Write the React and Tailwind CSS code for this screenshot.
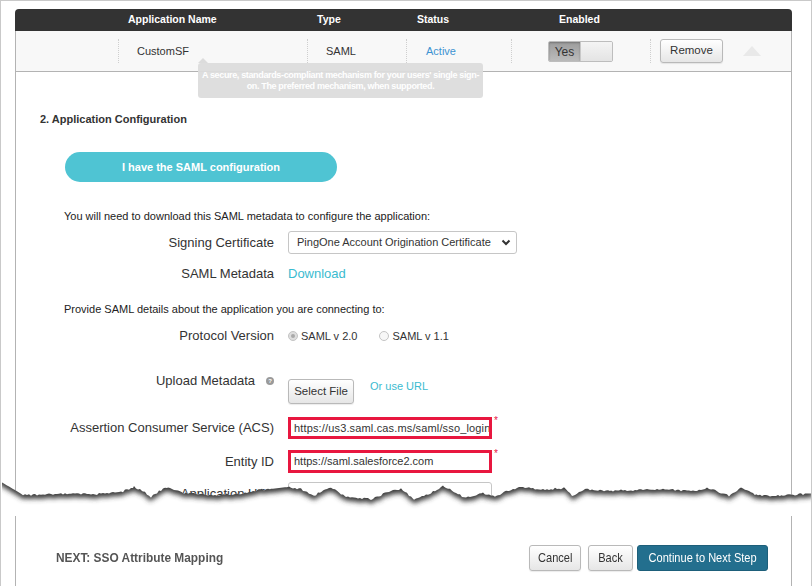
import React from "react";

const EDGE = [
  [0, 481], [14, 489], [22, 494], [60, 493], [100, 493], [120, 491], [133, 486], [142, 490],
  [150, 496], [158, 490], [167, 486], [175, 489], [183, 492], [210, 494], [240, 493],
  [255, 489], [270, 488], [288, 486], [300, 488], [313, 495], [322, 489], [330, 486],
  [345, 496], [370, 498], [390, 490], [400, 488], [413, 498], [430, 492], [443, 485],
  [455, 492], [465, 497], [480, 492], [495, 495], [508, 489], [520, 486], [540, 489],
  [563, 487], [572, 495], [585, 488], [610, 490], [630, 489], [660, 488], [690, 490],
  [708, 487], [728, 495], [740, 486], [755, 494], [780, 495], [812, 492],
];

// densify the tear line with a little deterministic noise
function tearPoints() {
  const pts = [];
  for (let i = 0; i < EDGE.length - 1; i++) {
    const [x0, y0] = EDGE[i];
    const [x1, y1] = EDGE[i + 1];
    for (let x = x0; x < x1; x += 2) {
      const t = (x - x0) / (x1 - x0);
      const n = Math.sin(x * 12.9898) * 43758.5453;
      const noise = (n - Math.floor(n) - 0.5) * 2;
      pts.push([x - 1, y0 + (y1 - y0) * t - 478 + (x > 20 ? noise : 0)]);
    }
  }
  pts.push([811, EDGE[EDGE.length - 1][1] - 478]);
  return pts;
}

function TornEdge() {
  const pts = tearPoints();
  const line = pts.map(([x, y], i) => `${i ? "L" : "M"}${x.toFixed(1)},${y.toFixed(1)}`).join(" ");
  const below = `${line} L811,40 L0,40 Z`;
  const above = `${line} L811,-20 L-20,-20 Z`;
  return (
    <svg className="absolute top-[478px] left-[1px]" width="810" height="37" viewBox="0 0 810 37">
      <defs>
        <clipPath id="tear-below">
          <path d={below} />
        </clipPath>
        <filter id="tear-blur" x="-5%" y="-100%" width="110%" height="300%">
          <feGaussianBlur stdDeviation="2.8" />
        </filter>
      </defs>
      <path d={below} fill="#ffffff" />
      <g clipPath="url(#tear-below)">
        <path d={above} fill="#3a3a3a" transform="translate(0,4)" filter="url(#tear-blur)" />
      </g>
    </svg>
  );
}

function Sep() {
  return <div className="h-[24px] border-l border-dotted border-[#cfcfcf]" />;
}

function Label({ children }) {
  return (
    <div className="w-[234px] flex items-center justify-end text-[13px] text-[#333] leading-[18px]">
      {children}
    </div>
  );
}

function GrayButton({ children, className = "" }) {
  return (
    <button
      className={`rounded-[3px] border border-[#b9b9b9] bg-gradient-to-b from-white to-[#e6e6e6] text-[#333] shadow-[0_1px_1px_rgba(0,0,0,0.08)] ${className}`}
    >
      {children}
    </button>
  );
}

export default function App() {
  return (
    <div className="relative w-[812px] h-[586px] overflow-hidden bg-white border-t border-x border-[#c9c9c9] font-['Liberation_Sans',Arial,sans-serif]">
      {/* upper piece */}
      <div className="ml-[14px] mt-[8px] w-[777px] h-[500px] overflow-hidden flex flex-col">
        <div className="h-[22px] bg-[#333333] rounded-t-[4px] grid grid-cols-[103px_189px_99px_105px_139px_1fr] items-center text-white text-[10.5px] font-bold">
          <div />
          <div className="pl-[10px]">Application Name</div>
          <div className="pl-[10px]">Type</div>
          <div className="pl-[11px]">Status</div>
          <div className="pl-[48px]">Enabled</div>
          <div />
        </div>

        <div className="flex-1 border-x border-[#b3b3b3] relative">
          <div className="h-[41px] bg-[#f8f8f8] border-b border-[#b3b3b3] grid grid-cols-[102px_189px_99px_105px_139px_1fr] items-center text-[11px] text-[#333]">
            <div />
            <div className="flex items-center">
              <Sep />
              <span className="pl-[18px]">CustomSF</span>
            </div>
            <div className="flex items-center">
              <Sep />
              <span className="pl-[18px]">SAML</span>
            </div>
            <div className="flex items-center">
              <Sep />
              <span className="pl-[19px] text-[#3d93d2]">Active</span>
            </div>
            <div className="flex items-center">
              <Sep />
              <div className="ml-[36px] flex h-[21px] rounded-[2px] border border-[#bdbdbd] overflow-hidden">
                <div className="w-[31px] bg-gradient-to-b from-[#9c9c9c] to-[#bcbcbc] shadow-[inset_0_1px_2px_rgba(0,0,0,0.25)] flex items-start justify-center pt-[1px] text-[12px] text-[#333]">
                  Yes
                </div>
                <div className="w-[32px] bg-gradient-to-b from-[#f4f4f4] to-[#e4e4e4] border-l border-[#c8c8c8]" />
              </div>
            </div>
            <div className="flex items-center">
              <Sep />
              <GrayButton className="ml-[9px] w-[63px] h-[24px] text-[11.5px]">Remove</GrayButton>
              <div className="ml-[20px] w-0 h-0 border-x-[9px] border-x-transparent border-b-[10px] border-b-[#e9e9e9]" />
            </div>
          </div>

          {/* tooltip over the row */}
          <div className="absolute left-[182px] top-[27px] w-0 h-0 border-x-[5px] border-x-transparent border-b-[5px] border-b-[#dcdcdc]" />
          <div className="absolute left-[182px] top-[32px] w-[285px] h-[35px] rounded-[3px] bg-[#dcdcdc]/95 text-white text-[9px] font-bold leading-[11px] text-center pt-[7px] tracking-[-0.35px] whitespace-nowrap">
            A secure, standards-compliant mechanism for your users' single sign-
            <br />
            on. The preferred mechanism, when supported.
          </div>

          <div className="pl-[24px] flex flex-col text-[#333]">
            <div className="mt-[40px] h-[14px] leading-[14px] text-[11px] font-bold">2. Application Configuration</div>

            <button className="mt-[26px] ml-[25px] w-[272px] h-[30px] rounded-full bg-[#4fc4d3] text-white text-[11px] font-bold">
              I have the SAML configuration
            </button>

            <div className="mt-[27px] ml-[24px] h-[14px] leading-[14px] text-[11px] text-[#222]">
              You will need to download this SAML metadata to configure the application:
            </div>

            <div className="mt-[8px] flex items-center">
              <Label>Signing Certificate</Label>
              <div className="ml-[14px] w-[229px] h-[23px] rounded-[3px] border border-[#c6c6c6] bg-white flex items-center justify-between pl-[8px] pr-[5px] text-[11px] text-[#333]">
                <span>PingOne Account Origination Certificate</span>
                <svg width="10" height="7" viewBox="0 0 10 7">
                  <path d="M1.5 1.5 L5 5 L8.5 1.5" fill="none" stroke="#333" strokeWidth="2" />
                </svg>
              </div>
            </div>

            <div className="mt-[10px] h-[20px] flex items-center">
              <Label>SAML Metadata</Label>
              <span className="ml-[14px] text-[13px] text-[#3bbbd0]">Download</span>
            </div>

            <div className="mt-[18px] ml-[24px] h-[14px] leading-[14px] text-[11px] text-[#222]">
              Provide SAML details about the application you are connecting to:
            </div>

            <div className="mt-[10px] h-[20px] flex items-center">
              <Label>Protocol Version</Label>
              <div className="ml-[14px] flex items-center text-[11px] text-[#333]">
                <span className="w-[10px] h-[10px] rounded-full border border-[#c4c4c4] bg-[#dedede] flex items-center justify-center">
                  <span className="w-[4px] h-[4px] rounded-full bg-[#a9a9a9]" />
                </span>
                <span className="ml-[3px]">SAML v 2.0</span>
                <span className="ml-[22px] w-[10px] h-[10px] rounded-full border border-[#c4c4c4] bg-[#f7f7f7]" />
                <span className="ml-[3px]">SAML v 1.1</span>
              </div>
            </div>

            <div className="mt-[26px] flex items-start">
              <Label>
                <span>Upload Metadata</span>
                <span className="ml-[11px] w-[8px] h-[8px] rounded-full bg-[#9a9a9a] text-white text-[6px] leading-[8px] font-bold flex items-center justify-center">
                  ?
                </span>
              </Label>
              <GrayButton className="ml-[14px] mt-[7px] w-[66px] h-[25px] text-[11.5px]">Select File</GrayButton>
              <span className="ml-[16px] mt-[7px] leading-[14px] text-[11px] text-[#3bbbd0]">Or use URL</span>
            </div>

            <div className="mt-[13px] h-[22px] flex items-center">
              <Label>Assertion Consumer Service (ACS)</Label>
              <div className="ml-[14px] w-[204px] h-[22px] border-[3px] border-[#e8173f] bg-white flex items-center pl-[3px] text-[11px] text-[#333] overflow-hidden whitespace-nowrap tracking-[0.15px]">
                https://us3.saml.cas.ms/saml/sso_login
              </div>
              <span className="self-start ml-[2px] -mt-[1px] text-[10px] leading-[10px] text-[#e8173f]">*</span>
            </div>

            <div className="mt-[11px] h-[23px] flex items-center">
              <Label>Entity ID</Label>
              <div className="ml-[14px] w-[204px] h-[23px] border-[3px] border-[#e8173f] bg-white flex items-center pl-[3px] text-[11px] text-[#333] whitespace-nowrap">
                https://saml.salesforce2.com
              </div>
              <span className="self-start ml-[2px] -mt-[1px] text-[10px] leading-[10px] text-[#e8173f]">*</span>
            </div>

            <div className="mt-[9px] h-[23px] flex items-center">
              <Label>Application URL</Label>
              <div className="ml-[14px] w-[204px] h-[23px] rounded-[3px] border border-[#c6c6c6] bg-white" />
            </div>
          </div>
        </div>
      </div>

      {/* lower piece */}
      <div className="ml-[14px] mt-[6px] w-[777px] h-[71px] border-x border-[#b3b3b3] pt-[15px] pl-[40px] pr-[23px] flex items-center justify-between">
        <span className="text-[13.5px] font-bold text-[#555] scale-x-[0.88] origin-left whitespace-nowrap">
          NEXT: SSO Attribute Mapping
        </span>
        <div className="flex items-center gap-[7px]">
          <GrayButton className="w-[52px] h-[26px] text-[13px]">
            <span className="inline-block scale-x-[0.85]">Cancel</span>
          </GrayButton>
          <GrayButton className="w-[45px] h-[26px] text-[13px]">
            <span className="inline-block scale-x-[0.85]">Back</span>
          </GrayButton>
          <button className="-ml-[3px] w-[131px] h-[26px] rounded-[3px] border border-[#1d5f7a] bg-[#236f8e] text-white text-[13px]">
            <span className="inline-block scale-x-[0.85] whitespace-nowrap">Continue to Next Step</span>
          </button>
        </div>
      </div>

      <TornEdge />
    </div>
  );
}
